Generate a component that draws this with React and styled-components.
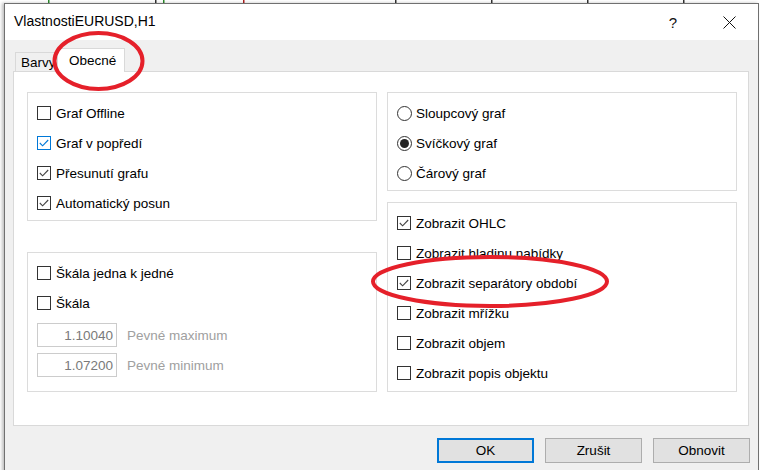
import React from "react";
import styled, { createGlobalStyle } from "styled-components";

const GlobalStyle = createGlobalStyle`
  html, body { margin: 0; padding: 0; background: #fff; overflow: hidden; }
  body { font-family: "Liberation Sans", Arial, sans-serif; color: #000; }
`;

const Screen = styled.div`
  position: relative;
  width: 760px;
  height: 470px;
  overflow: hidden;
  background: #fff;
  padding: 3px 0 0 4px;
  box-sizing: border-box;
`;

const Backdrop = styled.svg`
  position: absolute;
  left: 0;
  top: 0;
`;

const Marks = styled.svg`
  position: absolute;
  left: 0;
  top: 0;
  pointer-events: none;
  z-index: 5;
`;

const Dialog = styled.div`
  position: relative;
  width: 755px;
  height: 480px;
  box-sizing: border-box;
  border: 1px solid #707070;
  background: #f0f0f0;
  box-shadow: -2px 0 3px rgba(0, 0, 0, 0.25);
  display: flex;
  flex-direction: column;
`;

const TitleBar = styled.div`
  height: 36px;
  background: #fff;
  display: flex;
  align-items: center;
  padding-left: 9px;
`;

const Title = styled.div`
  flex: 1;
  font-size: 14px;
  margin-top: -2px;
`;

const TitleButtons = styled.div`
  display: flex;
  gap: 10px;
  padding-right: 6px;
`;

const TitleButton = styled.div`
  width: 46px;
  height: 30px;
  display: flex;
  align-items: center;
  justify-content: center;
  font-size: 15px;
  color: #111;
`;

const Body = styled.div`
  padding: 8px 8px 0 8px;
  display: flex;
  flex-direction: column;
`;

const TabRow = styled.div`
  display: flex;
  align-items: flex-end;
  height: 23px;
  padding-left: 2px;
`;

const Tab = styled.div`
  position: relative;
  box-sizing: border-box;
  height: ${(p) => (p.$active ? "24px" : "19px")};
  margin-bottom: ${(p) => (p.$active ? "-1px" : "0")};
  margin-left: ${(p) => (p.$active ? "-1px" : "0")};
  width: ${(p) => p.$w}px;
  padding-left: ${(p) => (p.$active ? "11px" : "5px")};
  border: 1px solid #d9d9d9;
  border-bottom: none;
  background: ${(p) => (p.$active ? "#fff" : "#f0f0f0")};
  z-index: ${(p) => (p.$active ? 2 : 1)};
  font-size: 13.5px;
  display: flex;
  align-items: center;
  overflow: hidden;
  white-space: nowrap;
`;

const Panel = styled.div`
  position: relative;
  z-index: 1;
  box-sizing: border-box;
  width: 736px;
  height: 355px;
  border: 1px solid #d9d9d9;
  background: #fff;
  padding: 20px 0 0 13px;
  display: grid;
  grid-template-columns: 350px 350px;
  column-gap: 10px;
  align-content: start;
`;

const Column = styled.div`
  display: flex;
  flex-direction: column;
  gap: ${(p) => p.$gap}px;
`;

const Group = styled.div`
  box-sizing: border-box;
  height: ${(p) => p.$h}px;
  border: 1px solid #dcdcdc;
  padding: 5px 9px 0 9px;
  display: flex;
  flex-direction: column;
`;

const Row = styled.label`
  height: 30px;
  display: flex;
  align-items: center;
  gap: ${(p) => (p.$radio ? 4 : 5)}px;
  font-size: 13.5px;
  white-space: nowrap;
`;

const Box = styled.span`
  box-sizing: border-box;
  width: 14px;
  height: 14px;
  border: 1px solid ${(p) => (p.$focus ? "#0078d7" : "#333")};
  background: #fff;
  display: flex;
  align-items: center;
  justify-content: center;
`;

const Radio = styled.span`
  box-sizing: border-box;
  width: 15px;
  height: 15px;
  border-radius: 50%;
  border: 1px solid #333;
  display: flex;
  align-items: center;
  justify-content: center;
  &::after {
    content: "";
    width: 9px;
    height: 9px;
    border-radius: 50%;
    background: #222;
    display: ${(p) => (p.$on ? "block" : "none")};
  }
`;

const InputRow = styled.div`
  display: flex;
  align-items: center;
  gap: 10px;
  margin-top: ${(p) => p.$mt}px;
  font-size: 13.5px;
`;

const NumBox = styled.div`
  box-sizing: border-box;
  width: 80px;
  height: 24px;
  border: 1px solid #cccccc;
  display: flex;
  align-items: center;
  justify-content: flex-end;
  padding-right: 3px;
  color: #7a7a7a;
`;

const Muted = styled.span`
  color: #a0a0a0;
`;

const Footer = styled.div`
  display: flex;
  justify-content: flex-end;
  gap: 11px;
  margin-top: 12px;
`;

const Button = styled.div`
  box-sizing: border-box;
  width: 97px;
  height: 25px;
  background: #e1e1e1;
  border: ${(p) => (p.$default ? "2px solid #0078d7" : "1px solid #adadad")};
  display: flex;
  align-items: center;
  justify-content: center;
  font-size: 13.5px;
`;

const Check = ({ color = "#333" }) => (
  <svg width="10" height="8" viewBox="0 0 10 8">
    <polyline points="0.8,4 3.6,6.8 9.2,1" fill="none" stroke={color} strokeWidth="1.1" />
  </svg>
);

const CheckRow = ({ label, checked, focus }) => (
  <Row>
    <Box $focus={focus}>{checked && <Check color={focus ? "#0078d7" : "#444"} />}</Box>
    {label}
  </Row>
);

const RadioRow = ({ label, on }) => (
  <Row $radio>
    <Radio $on={on} />
    {label}
  </Row>
);

export default function App() {
  return (
    <Screen>
      <GlobalStyle />
      <Backdrop width="760" height="4">
        {[48, 155, 163, 243, 395, 491, 587, 683].map((x, i) => (
          <rect key={x} x={x} y="0" width="1.5" height="3" fill={i === 0 || i === 2 ? "#2a8a2a" : i === 3 ? "#b02020" : "#333"} />
        ))}
      </Backdrop>
      <Dialog>
        <TitleBar>
          <Title>VlastnostiEURUSD,H1</Title>
          <TitleButtons>
            <TitleButton>?</TitleButton>
            <TitleButton>
              <svg width="13" height="13" viewBox="0 0 13 13">
                <path d="M0.5 0.5 L12.5 12.5 M12.5 0.5 L0.5 12.5" stroke="#111" strokeWidth="1" />
              </svg>
            </TitleButton>
          </TitleButtons>
        </TitleBar>
        <Body>
          <TabRow>
            <Tab $w={43}>Barvy</Tab>
            <Tab $active $w={68}>Obecné</Tab>
          </TabRow>
          <Panel>
            <Column $gap={31}>
              <Group $h={129}>
                <CheckRow label="Graf Offline" />
                <CheckRow label="Graf v popředí" checked focus />
                <CheckRow label="Přesunutí grafu" checked />
                <CheckRow label="Automatický posun" checked />
              </Group>
              <Group $h={140}>
                <CheckRow label="Škála jedna k jedné" />
                <CheckRow label="Škála" />
                <InputRow $mt={5}>
                  <NumBox>1.10040</NumBox>
                  <Muted>Pevné maximum</Muted>
                </InputRow>
                <InputRow $mt={6}>
                  <NumBox>1.07200</NumBox>
                  <Muted>Pevné minimum</Muted>
                </InputRow>
              </Group>
            </Column>
            <Column $gap={11}>
              <Group $h={99}>
                <RadioRow label="Sloupcový graf" />
                <RadioRow label="Svíčkový graf" on />
                <RadioRow label="Čárový graf" />
              </Group>
              <Group $h={190}>
                <CheckRow label="Zobrazit OHLC" checked />
                <CheckRow label="Zobrazit hladinu nabídky" />
                <CheckRow label="Zobrazit separátory období" checked />
                <CheckRow label="Zobrazit mřížku" />
                <CheckRow label="Zobrazit objem" />
                <CheckRow label="Zobrazit popis objektu" />
              </Group>
            </Column>
          </Panel>
          <Footer>
            <Button $default>OK</Button>
            <Button>Zrušit</Button>
            <Button>Obnovit</Button>
          </Footer>
        </Body>
      </Dialog>
      <Marks width="760" height="470">
        <ellipse cx="98.5" cy="61" rx="44" ry="28" fill="none" stroke="#e5202a" strokeWidth="4" />
        <ellipse cx="490" cy="281.5" rx="117" ry="24.5" fill="none" stroke="#e5202a" strokeWidth="4" />
      </Marks>
    </Screen>
  );
}
